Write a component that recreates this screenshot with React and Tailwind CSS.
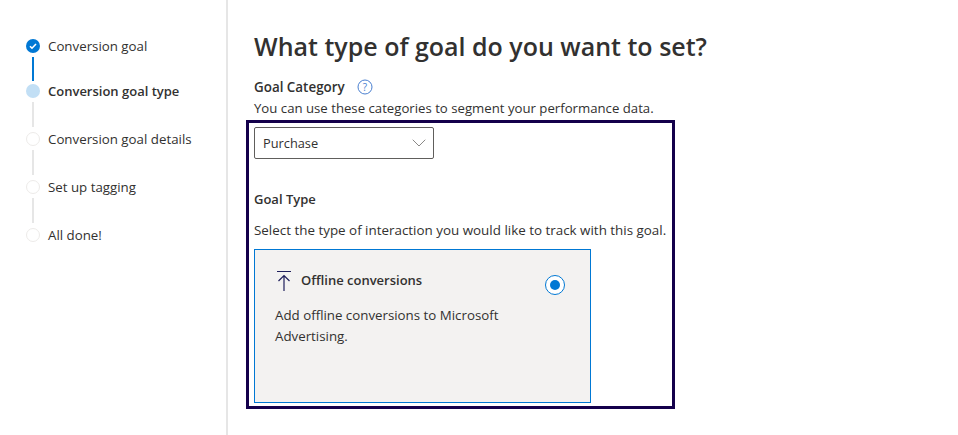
import { ChevronDown } from "lucide-react";

const steps = [
  { label: "Conversion goal", state: "done", line: "h-[24px] bg-[#0078d4]", lineGap: "mt-[2px] mb-[1px]" },
  { label: "Conversion goal type", state: "active", line: "h-[25px] bg-[#e6e6e6]", lineGap: "mt-[2px] mb-[3px]" },
  { label: "Conversion goal details", state: "todo", line: "h-[25px] bg-[#e6e6e6]", lineGap: "mt-[2px] mb-[3px]" },
  { label: "Set up tagging", state: "todo", line: "h-[25px] bg-[#e6e6e6]", lineGap: "mt-[2px] mb-[3px]" },
  { label: "All done!", state: "todo" },
];

const StepDot = ({ state }) => {
  if (state === "done") {
    return (
      <svg width="14" height="14" viewBox="0 0 14 14">
        <circle cx="7" cy="7" r="7" fill="#0078d4" />
        <path d="M4 7.2 L6 9.2 L10 5" fill="none" stroke="#fff" strokeWidth="1.6" />
      </svg>
    );
  }
  if (state === "active") {
    return <div className="w-[14px] h-[14px] rounded-full bg-[#c2dff5]" />;
  }
  return <div className="w-[14px] h-[14px] rounded-full border border-[#edebe9] bg-white" />;
};

const Stepper = () => (
  <div className="w-[228px] shrink-0 border-r-2 border-[#e6e6e6] pl-[26px] pt-[37px] min-h-[435px]">
    {steps.map((step) => (
      <div key={step.label}>
        <div className="flex items-center h-[18px]">
          <div className="w-[14px] flex justify-center">
            <StepDot state={step.state} />
          </div>
          <span
            className={`ml-[8px] leading-[18px] text-[#323130] whitespace-nowrap ${
              step.state === "active" ? "font-semibold text-[13px]" : "text-[13.3px]"
            }`}
          >
            {step.label}
          </span>
        </div>
        {step.line && (
          <div className={`w-[2px] ml-[6px] ${step.line} ${step.lineGap}`} />
        )}
      </div>
    ))}
  </div>
);

const App = () => {
  return (
    <div className="flex w-[958px] h-[435px] overflow-hidden bg-white font-['Open_Sans','Noto_Sans',sans-serif] text-[#323130]">
      <Stepper />

      <div className="pl-[26px] pt-[31px]">
        <h1 className="text-[25px] leading-[30px] font-semibold whitespace-nowrap">
          What type of goal do you want to set?
        </h1>

        <div className="flex items-center mt-[17px] h-[18px]">
          <span className="text-[13.4px] font-semibold">Goal Category</span>
          <svg className="ml-[12px]" width="16" height="16" viewBox="0 0 16 16">
            <circle cx="8" cy="8" r="7" fill="none" stroke="#4a7fd0" />
            <text x="8" y="11.5" textAnchor="middle" fontSize="10" fill="#4a7fd0">?</text>
          </svg>
        </div>
        <p className="text-[13.2px] leading-[18px] mt-[3px] whitespace-nowrap">
          You can use these categories to segment your performance data.
        </p>

        {/* highlighted block */}
        <div className="w-[429px] h-[289px] -ml-[8px] mt-[3px] border-[3px] border-[#14004b] pl-[5px] pt-[4px]">
          <div className="w-[180px] h-[32px] border border-[#605e5c] rounded-[2px] flex items-center justify-between pl-[8px] pr-[2px]">
            <span className="text-[12.8px] pt-[1px]">Purchase</span>
            <ChevronDown size={24} strokeWidth={1} className="text-[#8a8886]" />
          </div>

          <div className="text-[13px] font-semibold leading-[18px] mt-[31px]">Goal Type</div>
          <p className="text-[13.4px] leading-[18px] mt-[13px] whitespace-nowrap">
            Select the type of interaction you would like to track with this goal.
          </p>

          <div className="w-[337px] h-[154px] mt-[10px] bg-[#f3f2f1] border border-[#0078d4] pl-[20px] pr-[25px] pt-[20px]">
            <div className="flex items-start justify-between">
              <div className="flex items-center">
                <svg width="18" height="22" viewBox="0 0 18 22" className="text-[#1f1f5c]">
                  <path d="M2 1.5 H16 M9 21 V6 M3.5 11 L9 5.5 L14.5 11" fill="none" stroke="currentColor" strokeWidth="1.2" />
                </svg>
                <span className="ml-[8px] text-[13px] font-semibold">Offline conversions</span>
              </div>
              <div className="mt-[5px] w-[20px] h-[20px] rounded-full border border-[#0078d4] bg-white flex items-center justify-center">
                <div className="w-[10px] h-[10px] rounded-full bg-[#0078d4]" />
              </div>
            </div>
            <p className="text-[13.3px] leading-[21px] mt-[10px] w-[260px]">
              Add offline conversions to Microsoft Advertising.
            </p>
          </div>
        </div>
      </div>
    </div>
  );
};

export default App;
